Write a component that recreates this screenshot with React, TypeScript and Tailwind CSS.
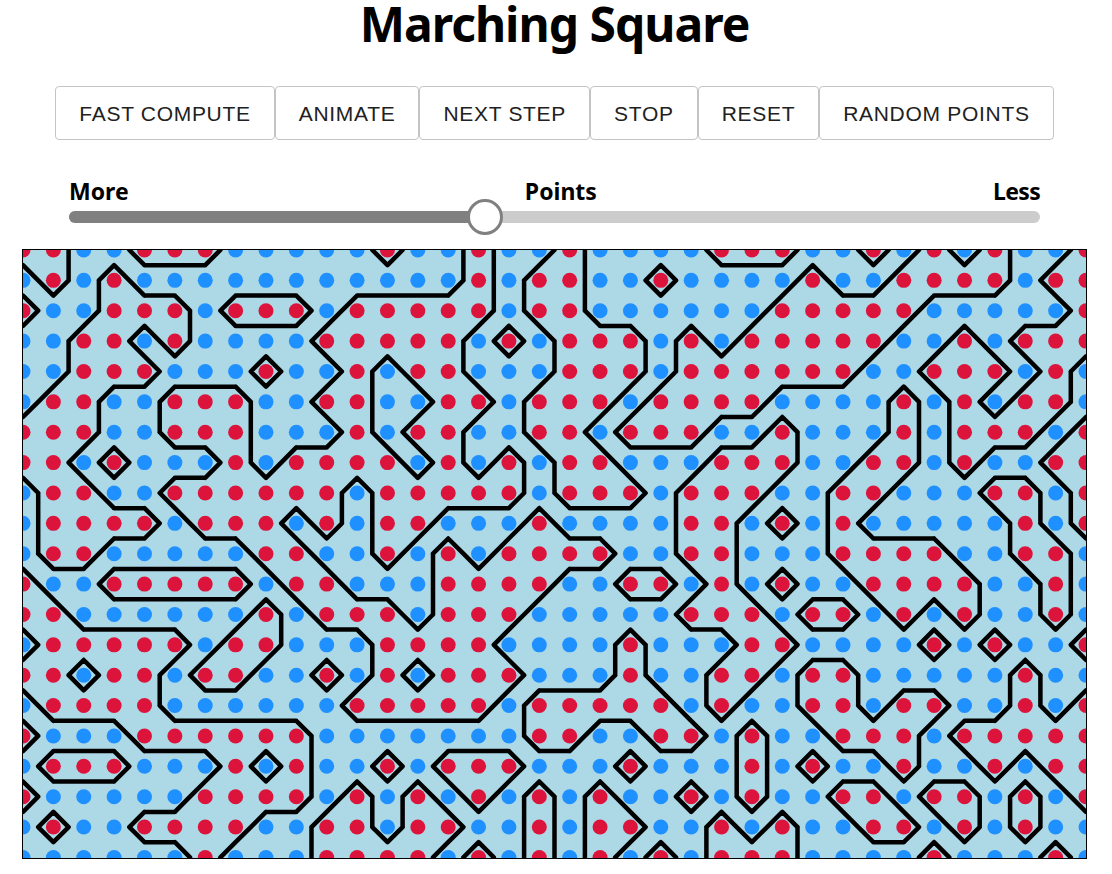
import React from "react";

const SPACING = 1063 / 35;

// one string per row, 1 = red point, 0 = blue point
const GRID = [
  "110011100000100100100001110010101001",
  "010100000000000101100100001001111011",
  "100111011101111101100000011111000001",
  "001101000011111010111010111110010111",
  "001110001001011000111011111100111010",
  "011001110011001101110111100001010110",
  "111001110001011001101110010001011101",
  "110100010111101010110001110011010011",
  "011001111110111110111011100110001101",
  "011110111010110001000011010100000101",
  "011000001100101011110011000111100110",
  "100111110110001111001101010011110010",
  "110000001011101110000011101101010010",
  "011111011000111100001000110000101001",
  "110110110010101110001001101100000100",
  "011110000001111101111101001101100101",
  "100011111100000001100110100111011111",
  "011100010100101110001000101001001011",
  "100000111101010101010010100110110101",
  "010011110011011001011001010011010100",
  "000000100011110101010101110000100010",
];

function contourPath(rows: string[]) {
  const at = (c: number, r: number) => rows[r][c] === "1";
  const px = (n: number) => (n * SPACING).toFixed(1);
  const seg = (a: number[], b: number[]) => `M${px(a[0])} ${px(a[1])}L${px(b[0])} ${px(b[1])}`;
  let d = "";
  for (let r = 0; r < rows.length - 1; r++) {
    for (let c = 0; c < rows[r].length - 1; c++) {
      const top = [c + 0.5, r];
      const right = [c + 1, r + 0.5];
      const bottom = [c + 0.5, r + 1];
      const left = [c, r + 0.5];
      const idx = (at(c, r) ? 8 : 0) + (at(c + 1, r) ? 4 : 0) + (at(c + 1, r + 1) ? 2 : 0) + (at(c, r + 1) ? 1 : 0);
      switch (idx) {
        case 1:
        case 14:
          d += seg(left, bottom);
          break;
        case 2:
        case 13:
          d += seg(bottom, right);
          break;
        case 3:
        case 12:
          d += seg(left, right);
          break;
        case 4:
        case 11:
          d += seg(top, right);
          break;
        case 6:
        case 9:
          d += seg(top, bottom);
          break;
        case 7:
        case 8:
          d += seg(top, left);
          break;
        case 5:
          d += seg(top, right) + seg(left, bottom);
          break;
        case 10:
          d += seg(top, left) + seg(bottom, right);
          break;
      }
    }
  }
  return d;
}

const buttons = ["FAST COMPUTE", "ANIMATE", "NEXT STEP", "STOP", "RESET", "RANDOM POINTS"];

export default function App() {
  const sliderValue = 42.84;

  return (
    <div className="w-[1109px] bg-white font-['Noto_Sans',sans-serif] text-black">
      <h1 className="text-center text-[48px] leading-[48px] font-bold tracking-[-1px]">Marching Square</h1>

      <div className="flex justify-center mt-[38px]">
        {buttons.map((label) => (
          <button
            key={label}
            className="h-[54px] px-[23px] pt-[1px] border border-[#c4c4c4] rounded-[4px] bg-white font-['Liberation_Sans',sans-serif] text-[21px] tracking-[0.7px] text-[#212121]"
          >
            {label}
          </button>
        ))}
      </div>

      <div className="ml-[69px] w-[971px] mt-[36px]">
        <div className="flex justify-between text-[23px] leading-[30px] font-bold">
          <span>More</span>
          <span>Points</span>
          <span className="tracking-[-0.7px]">Less</span>
        </div>
        <div className="relative h-3 mt-[5px] rounded-md bg-[#cccccc]">
          <div className="h-3 rounded-l-md bg-[#808080]" style={{ width: `${sliderValue}%` }} />
          <div
            className="absolute top-[-12px] w-9 h-9 -ml-[18px] rounded-full bg-white border-[3px] border-[#808080]"
            style={{ left: `${sliderValue}%` }}
          />
        </div>
      </div>

      <div className="ml-[22px] mt-[26px] w-[1065px] border border-black overflow-hidden">
        <svg width={1063} height={608} viewBox="0 0 1063 608" className="block bg-[#add8e6] blur-[0.4px]">
          {GRID.map((row, r) =>
            row.split("").map((v, c) => (
              <circle
                key={`${r}-${c}`}
                cx={c * SPACING}
                cy={r * SPACING}
                r={7.5}
                fill={v === "1" ? "#dc143c" : "#1e90ff"}
              />
            ))
          )}
          <path d={contourPath(GRID)} fill="none" stroke="#000000" strokeWidth={4.5} strokeLinecap="round" />
        </svg>
      </div>
    </div>
  );
}
